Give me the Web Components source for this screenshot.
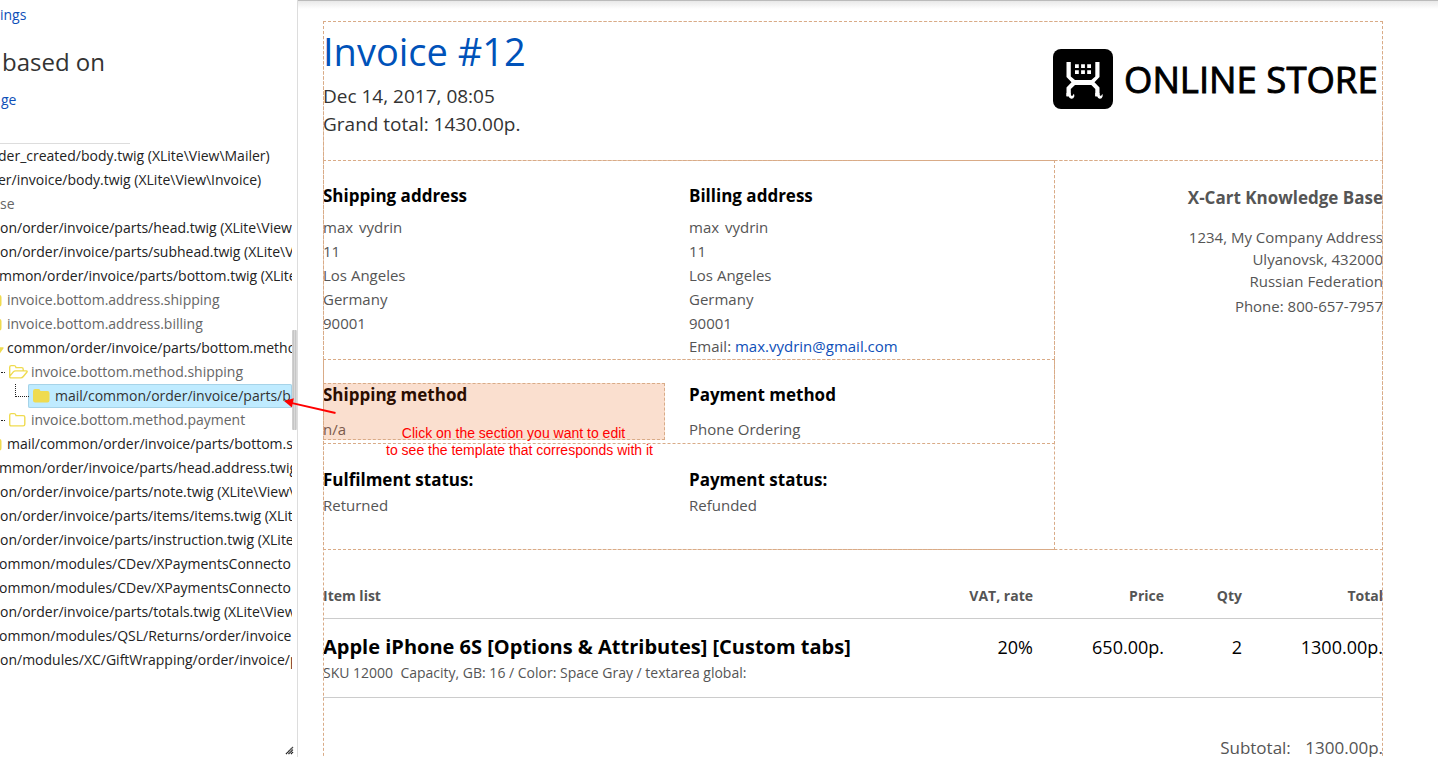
<!DOCTYPE html>
<html lang="en">
<head>
<meta charset="utf-8">
<title>Invoice template editor</title>
<style>
html,body{margin:0;height:100%;overflow:hidden;background:#fff}
body{font-family:"Open Sans",sans-serif;color:#333}
</style>
</head>
<body>
<editor-app></editor-app>
<script>
const define = (name, css, html) => customElements.define(name, class extends HTMLElement {
  constructor() {
    super();
    this.attachShadow({ mode: 'open' }).innerHTML = `<style>*{box-sizing:border-box}${css}</style>${typeof html === 'function' ? html(this) : html}`;
  }
});

const FOLDER = {
  solid: '<path d="M0 3.200Q0 1 2.200 1H5.400Q7.200 1 7.400 3H14.400Q16.500 3 16.500 5.200V12.300Q16.500 14.500 14.400 14.500H2.200Q0 14.500 0 12.300Z" fill="#efdb50"/>',
  line: '<path d="M.7 3.200Q.7 1.600 2.200 1.600H5.200Q6.800 1.600 7 3.600H14.200Q15.800 3.600 15.800 5.200V12.300Q15.800 13.900 14.200 13.900H2.200Q.7 13.900 .7 12.300Z" fill="none" stroke="#efdb50" stroke-width="1.400"/>',
  open: '<path d="M.7 12.400V3.200Q.7 1.600 2.200 1.600H5.200Q6.800 1.600 7 3.600H12.700Q14.200 3.600 14.200 5.200V6.800M.7 12.400L4.300 7.900Q5.200 6.900 6.600 6.900H17.300Q18.700 7.100 17.800 8.200L14.300 12.500Q13.300 13.900 11.800 13.900H2Q.7 13.900 .7 12.400Z" fill="none" stroke="#efdb50" stroke-width="1.400" stroke-linejoin="round"/>',
  openSolid: '<path d="M0 12V3.200Q0 1 2.200 1H5.400Q7.200 1 7.400 3H12.500Q14.900 3 14.900 5.600H6.500Q4.500 5.600 3.400 7ZM1 13.600L4.600 8.500Q5.400 7.300 6.800 7.300H18Q19.200 7.300 18.400 8.600L15.200 13Q14.100 14.500 12.500 14.500H2Q.5 14.500 1 13.600Z" fill="#efdb50"/>'
};

define('folder-icon', ':host{display:block;flex:none;width:23px;height:16px}svg{display:block}',
  el => `<svg width="19" height="16" viewBox="0 0 19 16">${FOLDER[el.getAttribute('kind')]}</svg>`);

define('tree-row', `
:host{display:flex;align-items:center;height:24px;white-space:pre;font-size:14px;line-height:24px;color:#222;margin-left:var(--x,0px)}
:host([muted]){color:#666}
:host([selected]){background:#bfebff;box-shadow:inset 0 0 0 1px #a6d3e8;border-radius:2px;padding-left:5px;color:#333}
`, '<slot></slot>');

define('side-panel', `
:host{display:block;position:relative;width:298px;height:757px;border-right:1px solid #ddd;overflow:hidden}
.link{color:#0e4fb8;font-size:14px;line-height:20px;height:20px}
.top{margin-top:5px}
h2{margin:20px 0 0 2px;font-weight:400;font-size:24px;line-height:34px;color:#333}
.page{margin:11px 0 0 1px}
hr{margin:33px 0 0;width:130px;border:0;border-top:1px solid #ddd}
.tree{width:292px;overflow:hidden;position:relative}
.bar{position:absolute;left:292px;top:330px;width:5px;height:100px;border-radius:1px;background:linear-gradient(90deg,#d0d0d0 1px,#c6c6c6 1px 2px,#d8d8d8 2px 3px,#c6c6c6 3px 4px,#d8d8d8 4px)}
.grip{position:absolute;left:285px;top:746px}
.dots{position:absolute;left:15px;top:240px;width:14px;height:13px;border-left:1px dotted #222;border-bottom:1px dotted #222}
.d1,.d2{position:absolute;left:1px;width:4px;border-top:1px dotted #222}
.d1{top:228px}.d2{top:276px}
`, `
<div class="link top">ings</div><h2>based on</h2><div class="link page">ge</div><hr>
<div class="tree">
<tree-row style="--x:-2px">der_created/body.twig (XLite\\View\\Mailer)</tree-row>
<tree-row style="--x:-2px">er/invoice/body.twig (XLite\\View\\Invoice)</tree-row>
<tree-row muted>se</tree-row>
<tree-row>on/order/invoice/parts/head.twig (XLite\\View</tree-row>
<tree-row>on/order/invoice/parts/subhead.twig (XLite\\V</tree-row>
<tree-row style="--x:-1px">mmon/order/invoice/parts/bottom.twig (XLite</tree-row>
<tree-row muted style="--x:-15px"><folder-icon kind="solid" style="width:22px"></folder-icon>invoice.bottom.address.shipping</tree-row>
<tree-row muted style="--x:-15px"><folder-icon kind="solid" style="width:22px"></folder-icon>invoice.bottom.address.billing</tree-row>
<tree-row style="--x:-15px"><folder-icon kind="openSolid" style="width:22px"></folder-icon>common/order/invoice/parts/bottom.metho</tree-row>
<tree-row muted style="--x:9px"><folder-icon kind="open" style="width:22px"></folder-icon>invoice.bottom.method.shipping</tree-row>
<tree-row selected style="--x:28px"><folder-icon kind="solid" style="width:22px"></folder-icon>mail/common/order/invoice/parts/b</tree-row>
<tree-row muted style="--x:9px"><folder-icon kind="line" style="width:22px"></folder-icon>invoice.bottom.method.payment</tree-row>
<tree-row style="--x:-15px"><folder-icon kind="solid" style="width:22px"></folder-icon>mail/common/order/invoice/parts/bottom.s</tree-row>
<tree-row style="--x:-1px">mmon/order/invoice/parts/head.address.twig</tree-row>
<tree-row>on/order/invoice/parts/note.twig (XLite\\View\\</tree-row>
<tree-row>on/order/invoice/parts/items/items.twig (XLit</tree-row>
<tree-row>on/order/invoice/parts/instruction.twig (XLite</tree-row>
<tree-row style="--x:-1px">ommon/modules/CDev/XPaymentsConnecto</tree-row>
<tree-row style="--x:-1px">ommon/modules/CDev/XPaymentsConnecto</tree-row>
<tree-row>on/order/invoice/parts/totals.twig (XLite\\View</tree-row>
<tree-row style="--x:-1px">ommon/modules/QSL/Returns/order/invoice</tree-row>
<tree-row>on/modules/XC/GiftWrapping/order/invoice/p</tree-row>
<i class="dots"></i><i class="d1"></i><i class="d2"></i>
</div>
<div class="bar"></div>
<svg class="grip" width="9" height="9" viewBox="0 0 9 9"><path d="M1 8L8 1M3.500 8L8 3.500M6 8L8 6" stroke="#222" stroke-width="1.300" stroke-dasharray="1.400 .2"/></svg>
`);

define('store-logo', `
:host{display:flex;align-items:center;width:330px;height:60px}
svg{flex:none;display:block}
span{margin-left:11px;font-size:36.500px;line-height:60px;font-weight:500;color:#000;white-space:nowrap;-webkit-text-stroke:.9px #000}
`, `
<svg width="60" height="60" viewBox="0 0 60 60"><rect width="60" height="60" rx="8"/>
<g fill="#fff"><path d="M13.500 13H17.800V27.500L22 31H38.300L42.300 27.500V13H46.500V28L41.500 33.300L46.500 38.500V47H42.300V40L38.300 36H22L17.800 40V47H13.500V38.500L18.500 33.300L13.500 28Z"/>
<path d="M22 15.300h3.800v3.800H22zM28.100 15.300h3.800v3.800h-3.800zM34.200 15.300h3.800v3.800h-3.800zM22 21.200h3.800V25H22zM28.100 21.200h3.800V25h-3.800zM34.200 21.200h3.800V25h-3.800z"/><path d="M13.500 44H17.500Q17.200 47 19.500 46.800Q20.500 46.500 20.300 44.800Q21.800 45.500 21.300 47.600Q20.500 50 18.300 49.800Q16.200 49.600 15.800 47.500H13.500ZM42.300 44H46.500Q46 47 48 46.800Q49.200 46.500 49 44.800Q50 45.500 49.600 47.600Q48.800 50 46.700 49.800Q44.700 49.600 44.300 47.500H42.300Z"/></g></svg>
<span>ONLINE STORE</span>`);

define('info-block', `
:host{display:block;width:366px;font-size:15px;line-height:24px;color:#555;white-space:pre}
h3{margin:0 0 var(--gap,8px);font-size:17px;line-height:24px;font-weight:700;color:var(--head,#000)}
`, el => `<h3>${el.getAttribute('heading')}</h3><slot></slot>`);

define('item-row', `
:host{display:grid;grid-template-columns:710px 131px 78px 141px;text-align:right;white-space:nowrap}
`, '<slot></slot>');

define('invoice-sheet', `
:host{display:block;width:1060px;height:780px}
.out,.zone{outline:1px dashed #d9ab87;outline-offset:-1px}
.out{height:780px}
header{display:flex;justify-content:space-between;height:140px}
h1{margin:4px 0 5px;font-size:38px;line-height:52px;font-weight:400;color:#0052b9}
.meta{font-size:19px;line-height:28px;color:#333}
store-logo{margin-top:28px}
.mid{display:flex;height:390px;margin-top:-1px}
.left{width:732px}
.row{display:flex;outline:1px dashed #d9ab87;outline-offset:-1px}
.addr{height:200px;padding-top:24px}
.addr info-block{--gap:7px}
.meth{height:85px;margin-top:-1px;padding-top:24px}
.stat{padding-top:24px;display:flex}
.hot{width:342px;height:57px;margin-right:24px;background:#fadfcf;outline:1px dashed #d9ab87;outline-offset:-1px}
.hot info-block{width:342px;--gap:10px;--head:#2a0d00;color:#7a5a4c}
.person{word-spacing:2px}
a{color:#0e4fb8}
.company{margin-left:-1px;width:329px;padding-top:26px;text-align:right;font-size:15px;line-height:22px;color:#555}
.company b{display:block;font-size:17px;line-height:24px;margin-bottom:16px}
.company p{margin:0}
.th{font-size:14px;line-height:20px;font-weight:700;color:#555;padding-top:36px;height:69px;border-bottom:1px solid #ccc}
.td{font-size:18px;line-height:28px;color:#000;padding-top:14px;height:79px;border-bottom:1px solid #ccc}
.name{display:block;text-align:left;grid-area:1/1}
.c{grid-row:1}
.c1{grid-column:1}
.sku{margin-top:2px;font-size:14px;line-height:20px;color:#555;white-space:pre}
.sub{display:flex;justify-content:flex-end;gap:14.500px;font-size:17px;line-height:24px;color:#555;padding-top:38px}
`, `
<div class="out">
<header class="zone"><div><h1>Invoice #12</h1><div class="meta">Dec 14, 2017, 08:05<br>Grand total: 1430.00p.</div></div><store-logo></store-logo></header>
<div class="mid zone"><div class="left zone">
<div class="row addr"><info-block heading="Shipping address"><div class="person">max vydrin</div><div>11</div><div>Los Angeles</div><div>Germany</div><div>90001</div></info-block><info-block heading="Billing address"><div class="person">max vydrin</div><div>11</div><div>Los Angeles</div><div>Germany</div><div>90001</div><div style="line-height:22px">Email: <a>max.vydrin@gmail.com</a></div></info-block></div>
<div class="row meth"><div class="hot"><info-block heading="Shipping method">n/a</info-block></div><info-block heading="Payment method" style="--gap:10px">Phone Ordering</info-block></div>
<div class="stat"><info-block heading="Fulfilment status:" style="--gap:1px">Returned</info-block><info-block heading="Payment status:" style="--gap:1px">Refunded</info-block></div>
</div>
<div class="company"><b>X-Cart Knowledge Base</b><p>1234, My Company Address</p><p>Ulyanovsk, 432000</p><p>Russian Federation</p><p style="margin-top:3px">Phone: 800-657-7957</p></div></div>
<item-row class="th"><span class="name">Item list</span><span class="c c1">VAT, rate</span><span class="c">Price</span><span class="c">Qty</span><span class="c">Total</span></item-row>
<item-row class="td"><div class="name"><b style="font-size:20px">Apple iPhone 6S [Options &amp; Attributes] [Custom tabs]</b><div class="sku">SKU 12000  Capacity, GB: 16 / Color: Space Gray / textarea global:</div></div><span class="c c1">20%</span><span class="c">650.00p.</span><span class="c">2</span><span class="c">1300.00p.</span></item-row>
<div class="sub"><span>Subtotal:</span><span>1300.00p.</span></div>
</div>`);

define('callout-note', `
:host{position:absolute;left:280px;top:395px;width:380px;color:#f00;font:14px/17px "Liberation Sans",sans-serif;text-align:center}
svg{position:absolute;left:0;top:0}
p{margin:30px 0 0 99px;width:281px;white-space:nowrap}
span{margin-right:12px}
`, `<svg width="60" height="24" viewBox="0 0 60 24"><path d="M55.500 18L9 7.300" stroke="#f00" stroke-width="1.800"/><path d="M4 6L13.800 3.200L11.900 12.500Z" fill="#f00"/></svg><p><span>Click on the section you want to edit</span><br>to see the template that corresponds with it</p>`);

define('editor-app', `
:host{display:flex;position:relative;width:1438px;height:757px;overflow:hidden}
main{flex:1;padding:20px 0 0 25px;border-top:1px solid #bbb;background:linear-gradient(#e9e9e9,#fff 8px)}
`, `<side-panel></side-panel><main><invoice-sheet></invoice-sheet></main><callout-note></callout-note>`);
</script>
</body>
</html>
